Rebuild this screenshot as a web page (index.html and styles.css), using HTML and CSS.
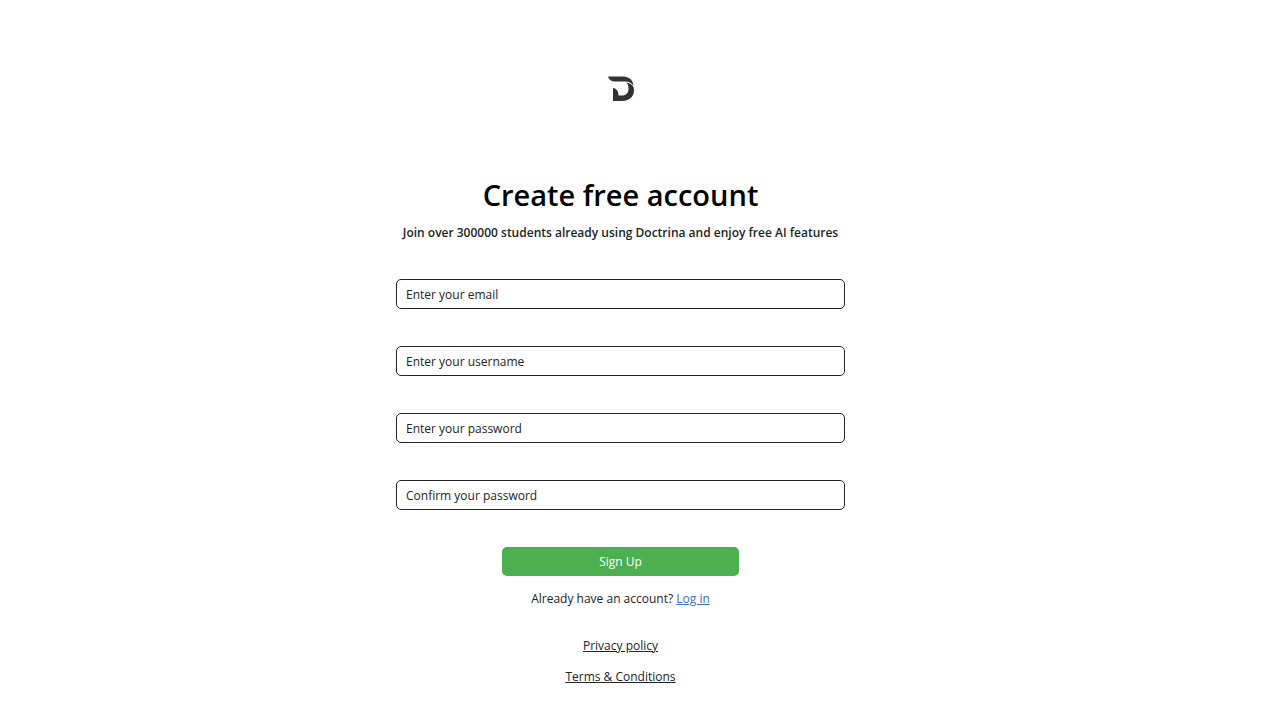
FILE: index.html
```html
<!DOCTYPE html>
<html lang="en">
<head>
    <meta charset="UTF-8">
    <meta name="viewport" content="width=device-width, initial-scale=1.0">
    <title>Create free account</title>
    <link rel="stylesheet" href="styles.css">
</head>
<body>
    <main class="signup">
        <svg class="logo" viewBox="0 0 26 26" role="img" aria-label="Doctrina">
            <path d="M0 0.500H15C21 0.500 25 4 25.500 9.500C23 7 21 5.500 17 5.500H7C3.500 5.500 1 4 0 0.500Z"/>
            <path d="M5 12C8.500 12.500 10.500 15 10.500 19.500H14C18 19.500 20.500 17 20.500 13C20.500 10.500 20 8.500 18.500 6.500C23 7.500 26 9.500 26 14C26 21 21 25 14 25H5Z"/>
        </svg>
        <h1>Create free account</h1>
        <p class="subtitle">Join over 300000 students already using Doctrina and enjoy free AI features</p>
        <form class="signup-form">
            <input type="email" aria-label="Email" placeholder="Enter your email" required>
            <input type="text" aria-label="Username" placeholder="Enter your username" required>
            <input type="password" aria-label="Password" placeholder="Enter your password" required>
            <input type="password" aria-label="Confirm password" placeholder="Confirm your password" required>
            <button type="submit">Sign Up</button>
        </form>
        <p class="login">Already have an account? <a href="#">Log in</a></p>
        <nav class="links">
            <a href="#">Privacy policy</a>
            <a href="#">Terms &amp; Conditions</a>
        </nav>
    </main>
</body>
</html>
```
FILE: styles.css
```css
* {
    margin: 0;
    padding: 0;
    box-sizing: border-box;
}

body {
    font-family: "Segoe UI", "Open Sans", sans-serif;
    font-size: 12px;
    line-height: 20px;
    color: #212529;
    background-color: #fff;
}

.signup {
    display: flex;
    flex-direction: column;
    align-items: center;
    padding: 76px 39px 32px 0;
}

.logo {
    width: 26px;
    height: 26px;
    fill: #333;
}

h1 {
    margin-top: 73px;
    font-size: 29px;
    font-weight: 600;
    line-height: 40px;
    color: #000;
}

.subtitle {
    margin-top: 8px;
    font-weight: 600;
}

.signup-form {
    display: flex;
    flex-direction: column;
    align-items: center;
    gap: 37px;
    width: 100%;
    max-width: 449px;
    margin-top: 36px;
}

input {
    width: 100%;
    height: 30px;
    padding: 0 9px;
    border: 1px solid #212529;
    border-radius: 5px;
    font: inherit;
}

input::placeholder {
    color: #212529;
}

button {
    width: 237px;
    height: 29px;
    border: none;
    border-radius: 5px;
    background-color: #4caf50;
    color: #fff;
    font: inherit;
    cursor: pointer;
}

.login {
    margin-top: 13px;
}

.login a {
    color: #3b71ca;
}

.links {
    display: flex;
    flex-direction: column;
    align-items: center;
    gap: 11px;
    margin-top: 27px;
}

.links a {
    color: #212529;
}
```
